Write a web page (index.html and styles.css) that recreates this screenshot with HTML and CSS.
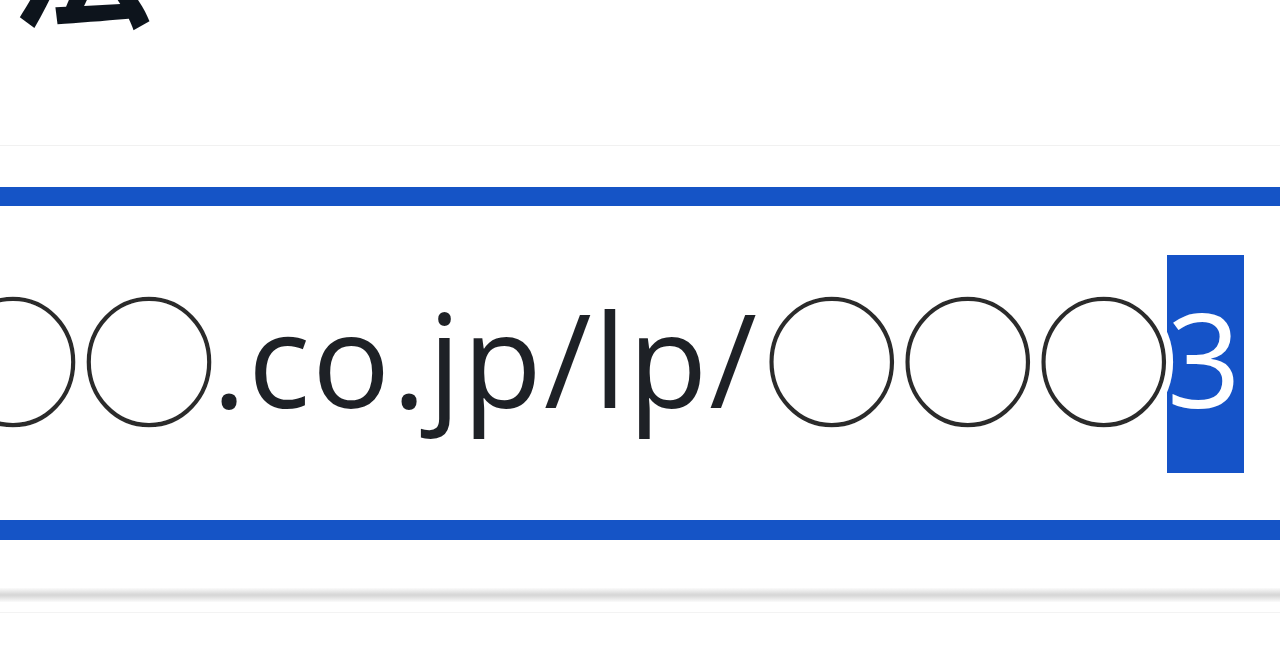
FILE: index.html
```html
<!DOCTYPE html>
<html lang="ja">
<head>
<meta charset="utf-8">
<title>URL入力</title>
<link rel="stylesheet" href="styles.css">
</head>
<body>
  <div class="page">
    <div class="title"><span class="title-text">法</span></div>
    <div class="rule"></div>
    <div class="field">
      <div class="field-text"><span class="maru">〇〇</span>.co.jp/lp/<span class="maru">〇〇〇</span><span class="sel">3</span></div>
    </div>
    <div class="shadow-line"></div>
    <div class="rule rule-low"></div>
  </div>
</body>
</html>
```
FILE: styles.css
```css
html, body {
  margin: 0;
  padding: 0;
  background: #ffffff;
  overflow: hidden;
}

.page {
  width: 1280px;
  height: 670px;
  overflow: hidden;
  display: flex;
  flex-direction: column;
}

.title {
  height: 32px;
  overflow: hidden;
  display: flex;
  align-items: flex-end;
  padding-left: 12px;
}

.title-text {
  font-family: "Noto Sans CJK JP", sans-serif;
  font-weight: 700;
  font-size: 140px;
  line-height: 140px;
  color: #0d141c;
  margin-bottom: 6px;
}

.rule {
  height: 1px;
  background: #f1f1f1;
  margin-top: 113px;
}

.field {
  margin-top: 41px;
  margin-left: -60px;
  margin-right: -60px;
  border-top: 19px solid #1554c6;
  border-bottom: 20px solid #1554c6;
  padding: 43px 0 54px 0;
  white-space: nowrap;
}

.field-text {
  font-family: "Open Sans", "Noto Sans CJK JP", sans-serif;
  font-size: 130px;
  line-height: 217px;
  letter-spacing: 1.8px;
  color: #1e2126;
}

.maru {
  display: inline-block;
  font-family: "Noto Sans CJK JP", sans-serif;
  font-size: 146px;
  line-height: 1;
  letter-spacing: -10px;
  vertical-align: -9px;
  transform: scaleY(1.04);
  color: #2b2b2b;
  -webkit-text-stroke: 7px #ffffff;
}

.sel {
  background: #1553c8;
  color: #ffffff;
  padding: 14px 1px 27px 0;
}

.shadow-line {
  height: 14px;
  margin-top: 48px;
  background: linear-gradient(to bottom, #fbfbfb, #d8d8d8 45%, #d8d8d8 55%, #fbfbfb);
}

.rule-low {
  margin-top: 10px;
  background: #f3f3f3;
}
```
